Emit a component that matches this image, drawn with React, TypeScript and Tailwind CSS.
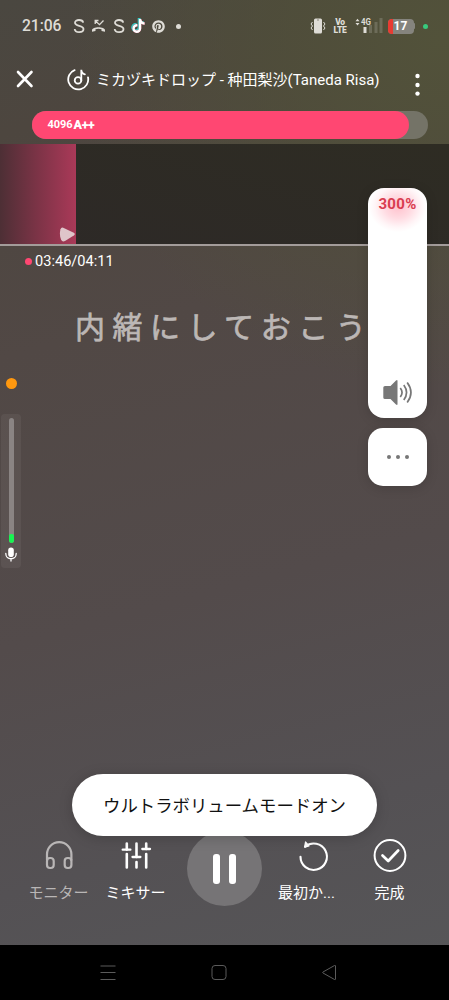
import React from 'react';
import { FaTiktok, FaPinterest } from 'react-icons/fa6';

function StatusBar() {
  return (
    <div className="flex h-[52px] shrink-0 items-center pl-[22px] pr-[20px] text-[#dedcd6]">
      <span className="w-[51px] text-[15.700px] font-medium leading-none tracking-[-0.1px]">21:06</span>
      <svg className="h-4 w-[12px]" viewBox="0 0 12 16" fill="none" stroke="currentColor" strokeWidth="1.8">
        <path d="M10.2 4.6C9.8 2.7 8.2 2 6 2 3.7 2 2 3 2 4.8c0 4 8.5 2 8.5 6.2 0 2-1.800 3.100-4.300 3.100-2.500 0-4.300-1-4.500-3.100" />
      </svg>
      <svg className="ml-[6px] h-4 w-[15px]" viewBox="0 0 15 16" fill="none" stroke="currentColor">
        <path d="M4.200 6V2.500H7.500M4.500 3l4 3.700 4-4.200" strokeWidth="1.300" />
        <path d="M1 12.300c0-4 13-4 13 0v1.400l-3.500-.6v-1.900c-2-.7-4-.7-6 0v1.900L1 13.700z" fill="currentColor" stroke="none" />
      </svg>
      <svg className="ml-[7px] h-4 w-[12px]" viewBox="0 0 12 16" fill="none" stroke="currentColor" strokeWidth="1.8">
        <path d="M10.2 4.6C9.8 2.7 8.2 2 6 2 3.700 2 2 3 2 4.800c0 4 8.500 2 8.500 6.200 0 2-1.800 3.100-4.300 3.100-2.500 0-4.300-1-4.500-3.100" />
      </svg>
      <FaTiktok className="ml-[7px] h-[14px] w-[13px] text-white [filter:drop-shadow(0.700px_0.600px_0_#d03358)_drop-shadow(-0.700px_-0.500px_0_#36c7c2)]" />
      <FaPinterest className="ml-[7px] h-[13px] w-[13px]" />
      <i className="ml-[11px] h-[5px] w-[5px] rounded-full bg-current" />
      <svg className="ml-auto h-4 w-4" viewBox="0 0 16 16" fill="none" stroke="currentColor" strokeWidth="1">
        <rect x="4" y="0.500" width="8" height="15" rx="1.500" fill="currentColor" stroke="none" />
        <path d="M2.500 4 1 6l1.500 2L1 10l1.500 2M13.500 4 15 6l-1.500 2 1.500 2-1.500 2" />
        <path d="M7 2h2" stroke="#8a877c" />
      </svg>
      <span className="ml-[7px] flex w-[15px] flex-col items-center text-[8.500px] font-black leading-[8px] tracking-[-0.3px]">
        <span>Vo</span><span>LTE</span>
      </span>
      <svg className="ml-[7px] h-4 w-[28px]" viewBox="0 0 28 16" fill="currentColor">
        <path d="m0.500 3.300 2-2.500 2 2.500zm0 1.800 2 2.400 2-2.400z" />
        <text x="6" y="6.800" fontSize="8.500" fontWeight="700" fontFamily="Roboto, sans-serif" textLength="10" lengthAdjust="spacingAndGlyphs">4G</text>
        <rect x="8.500" y="9" width="3" height="6" />
        <g opacity=".2"><rect x="14" y="7" width="3" height="8" /><rect x="19.500" y="4" width="3" height="11" /><rect x="24.500" y="0" width="3" height="15" /></g>
      </svg>
      <span className="relative ml-[5px] flex h-[15px] w-[26px] items-center justify-center overflow-hidden rounded-[4px] bg-[#85847e] text-[12px] font-bold text-white">
        <i className="absolute left-0 top-0 h-full w-[5px] bg-[#e83b32]" />
        <span className="relative">17</span>
      </span>
      <i className="h-[6px] w-[1.500px] rounded-r bg-[#85847e]" />
      <i className="ml-[8px] mr-[1px] h-[5px] w-[5px] rounded-full bg-[#38ca7d]" />
    </div>
  );
}

function Header() {
  return (
    <header className="flex h-[59px] shrink-0 items-start pl-[16px] pr-[29px] text-white">
      <svg className="mt-[18px] h-[18px] w-[18px]" viewBox="0 0 18 18" fill="none" stroke="currentColor" strokeWidth="2.600" strokeLinecap="round">
        <path d="m2 2 13.500 14M15.500 2 2 16" />
      </svg>
      <svg className="ml-[33px] mt-[16px] h-[23px] w-[23px]" viewBox="0 0 23 23" fill="none" stroke="currentColor" strokeWidth="1.800" strokeLinecap="round">
        <path d="M7.600 2.100A10 10 0 1 0 21 9.300" />
        <circle cx="11" cy="12.400" r="3.300" />
        <path d="M14.300 12.400V1.700c0 2.400 1 3.800 3.600 4.600" />
      </svg>
      <h1 className="ml-[6px] mt-[17px] whitespace-nowrap text-[15px] leading-[22px]">ミカヅキドロップ - 种田梨沙(Taneda Risa)</h1>
      <svg className="ml-auto mt-[20px] h-[26px] w-[5px]" viewBox="0 0 5 26" fill="currentColor">
        <circle cx="2.500" cy="4" r="2.200" /><circle cx="2.500" cy="13" r="2.200" /><circle cx="2.500" cy="21.600" r="2.200" />
      </svg>
    </header>
  );
}

function ScoreBar() {
  return (
    <div className="ml-[32px] mr-[21px] h-[28px] shrink-0 rounded-full bg-[#747367]">
      <div className="flex h-full w-[377px] items-center rounded-full bg-[#ff4772] pl-[15.500px] pt-px text-white">
        <span className="w-[26px] text-[11px] font-bold tracking-[-0.100px]">4096</span>
        <span className="text-[12.500px] font-black tracking-[-0.300px]">A++</span>
      </div>
    </div>
  );
}

function PitchPanel() {
  return (
    <div className="mt-[5px] flex h-[102px] shrink-0 border-b-2 border-[#a39c9a] bg-[linear-gradient(195deg,#2e2c23,#2d2927)]">
      <div className="flex w-[76px] items-end justify-end bg-[linear-gradient(90deg,#4d2f35,#783345_45%,#aa3958)] pb-[2px]">
        <svg className="h-[15px] w-[17px]" viewBox="0 0 17 15" fill="#dfc5ca">
          <path d="M4.200.7 14.800 5.700Q16.800 7 14.800 8.600L6 14Q3.300 15.300 2.100 12.700 0 7.500 1.500 2.200 2.200 0 4.200.7" />
        </svg>
      </div>
    </div>
  );
}

function MicMeter() {
  return (
    <div className="flex h-[154px] w-[20px] flex-col items-center rounded-[4px] bg-white/5 pt-[4px]">
      <div className="flex h-[125px] w-[5px] items-end overflow-hidden rounded-full bg-[#8a8483]">
        <div className="h-[9px] w-full rounded-[2px] bg-[#18f552]" />
      </div>
      <svg className="mt-[4px] h-[15px] w-[12px]" viewBox="0 0 12 15" fill="none" stroke="white" strokeWidth="1.300" strokeLinecap="round">
        <rect x="3.200" y=".5" width="5.600" height="9.500" rx="2.800" fill="white" stroke="none" />
        <path d="M.8 6.500c0 7 10.400 7 10.400 0M6 12v2" />
      </svg>
    </div>
  );
}

function VolumePanel() {
  return (
    <aside className="absolute left-[368px] top-[188px] flex w-[59px] flex-col gap-[10px]">
      <div className="flex h-[229.500px] flex-col items-center justify-between rounded-[16px] bg-white bg-[radial-gradient(ellipse_29px_25px_at_30px_19px,#ffc3ce,#ffdbe2_45%,#fff5f7_80%,#fff_100%)] pt-[7px] pb-[12px] shadow-[0_2px_12px_rgba(0,0,0,.15)]">
        <span className="text-[15px] font-bold leading-[18px] tracking-[0.300px] text-[#d93c50]">300%</span>
        <svg className="h-[27px] w-[30px]" viewBox="0 0 30 27" fill="none" stroke="#777" strokeWidth="1.700">
          <path d="M2 7h5.500L13 1.500q1.500-1.200 1.500.5v23q0 1.500-1.500.5L7.500 20H2Q.3 20 .3 18.500v-10Q.3 7 2 7z" fill="#777" stroke="none" />
          <path d="M17.300 9q3.500 4.500 0 9M20.800 6q5.500 7.500 0 15M24.200 3.500q7.500 10 0 20" />
        </svg>
      </div>
      <div className="flex h-[58.500px] items-center justify-center gap-[5px] rounded-[15px] bg-white shadow-[0_2px_12px_rgba(0,0,0,.15)]">
        <i className="h-1 w-1 rounded-full bg-[#777]" />
        <i className="h-1 w-1 rounded-full bg-[#777]" />
        <i className="h-1 w-1 rounded-full bg-[#777]" />
      </div>
    </aside>
  );
}

function Control({ label, dim, children }: { label: string; dim?: boolean; children: React.ReactNode }) {
  return (
    <div className={dim ? 'flex w-[77px] flex-col items-center text-[#b9b6b6]' : 'flex w-[77px] flex-col items-center text-white'}>
      <svg className="h-[34px] w-[34px] overflow-visible" viewBox="0 0 34 34" fill="none" stroke="currentColor" strokeWidth="2" strokeLinecap="round" strokeLinejoin="round">
        {children}
      </svg>
      <span className="mt-[9px] whitespace-nowrap text-[15px] leading-[22px]">{label}</span>
    </div>
  );
}

function Controls() {
  return (
    <div className="flex h-[114px] shrink-0 pl-[20px]">
      <div className="flex pt-[8px]">
        <Control label="モニター" dim>
          <path d="M5 21v-5.700a12.200 12.200 0 0 1 24.400 0V21" strokeWidth="2.200" />
          <rect x="5" y="19" width="6.700" height="10" rx="3" strokeWidth="2.200" />
          <rect x="22.700" y="19" width="6.700" height="10" rx="3" strokeWidth="2.200" />
        </Control>
        <Control label="ミキサー">
          <path d="M7.800 4.600v6M7.800 15v13.400M17.500 4.600V18M17.500 23v5.400M27.200 4.600V10M27.200 15v13.400" strokeWidth="2.600" />
          <path d="M3.700 10.700h7.700M13.500 18h7.900M23.300 10H31" strokeWidth="2.300" />
        </Control>
      </div>
      <div className="ml-[13px] flex h-[75px] w-[75px] items-center justify-center gap-[9px] rounded-full bg-[#767476]">
        <i className="h-[30px] w-[7px] rounded-[3px] bg-white" />
        <i className="h-[30px] w-[7px] rounded-[3px] bg-white" />
      </div>
      <div className="ml-[6px] flex gap-[6px] pt-[8px]">
        <Control label="最初か...">
          <path d="M10.500 17.700a13.200 13.200 0 1 0 4.700-10.100" strokeWidth="2.100" />
          <path d="m16 2.700-.8 4.900 6-2.500" strokeWidth="0" />
          <path d="M15.500 3 14.600 8.200 19 7z" fill="currentColor" strokeWidth="1.200" />
        </Control>
        <Control label="完成">
          <circle cx="17" cy="16.500" r="15.400" />
          <path d="m9.500 16.500 5.700 5.500 10-10.500" strokeWidth="2.700" />
        </Control>
      </div>
    </div>
  );
}

function NavBar() {
  return (
    <nav className="flex h-[55px] shrink-0 items-center bg-black pl-[100px] text-[#5b5b5b]">
      <svg className="h-4 w-4" viewBox="0 0 16 16" fill="none" stroke="currentColor"><path d="M.5 1h15M.5 7.500h15M.5 14.500h15" /></svg>
      <svg className="ml-[95px] h-4 w-4" viewBox="0 0 16 16" fill="none" stroke="currentColor"><rect x="1" y=".5" width="14" height="14" rx="3" /></svg>
      <svg className="ml-[94px] h-4 w-4" viewBox="0 0 16 16" fill="none" stroke="currentColor" strokeLinejoin="round"><path d="M14.500 1v13q0 1-1 .5L2 8q-.8-.5 0-1L13.500.5q1-.5 1 .5z" /></svg>
    </nav>
  );
}

export default function App() {
  return (
    <div className="relative flex h-[1000px] w-[449px] flex-col overflow-hidden bg-[radial-gradient(ellipse_370px_350px_at_98%_4%,#52523a_0%,rgba(80,80,56,.65)_45%,rgba(82,80,65,0)_100%),linear-gradient(165deg,#4a4740_0%,#4d463f_12%,#514845_32%,#534b4b_58%,#545154_80%,#575759_100%)] font-['Roboto','Noto_Sans_CJK_JP',sans-serif]">
      <StatusBar />
      <Header />
      <ScoreBar />
      <PitchPanel />
      <div className="flex h-[30px] shrink-0 items-center pl-[25px] text-[14.600px] leading-none text-white">
        <i className="mr-[3px] h-[7px] w-[7px] rounded-full bg-[#ff4772]" />
        <span>03:46/04:11</span>
      </div>
      <p className="mt-[29px] shrink-0 whitespace-nowrap pl-[75px] text-[30px] leading-[45px] tracking-[7.500px] text-[#bcb7b5] [-webkit-text-stroke:0.700px_#bcb7b5]" lang="ja">内緒にしておこう</p>
      <div className="flex flex-1 flex-col pl-[1px] pt-[28px]">
        <i className="mb-[25px] ml-[5px] h-[11px] w-[11px] shrink-0 rounded-full bg-[#ff980f]" />
        <MicMeter />
      </div>
      <Controls />
      <NavBar />
      <VolumePanel />
      <div role="status" className="absolute left-[72px] top-[774px] flex h-[62px] w-[305px] items-center justify-center rounded-full bg-white pt-[2px] text-[17.400px] text-[#111] shadow-[0_2px_14px_rgba(0,0,0,.18)]">
        ウルトラボリュームモードオン
      </div>
    </div>
  );
}
